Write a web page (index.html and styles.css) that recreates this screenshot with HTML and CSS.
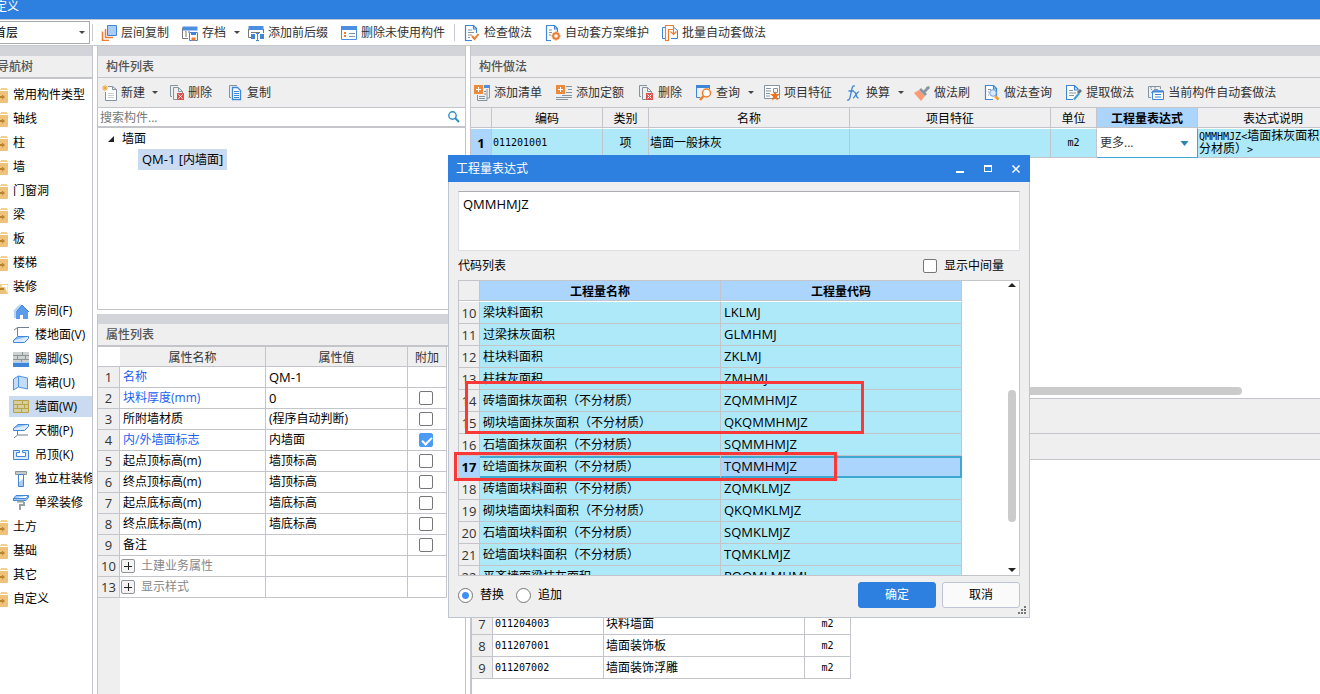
FILE: index.html
```html
<!DOCTYPE html>
<html lang="zh-CN">
<head>
<meta charset="utf-8">
<title>定义</title>
<link rel="stylesheet" href="styles.css">
</head>
<body>
<svg class="defs" aria-hidden="true">
  <symbol id="folder" viewBox="0 0 16 16"><path d="M9 1h6v1h1v1H8V2h1z" fill="#f3cf90"/><path d="M1 4h15v11q0 1-1 1H1z" fill="#eec27a"/><path d="M5 9h5V7.500l3 2.500-3 2.500V11H5z" fill="#b98330"/></symbol>
  <symbol id="folder-open" viewBox="0 0 16 16"><path d="M1 3h6v2h10v10H1z" fill="#f3cf90"/><path d="M10 6h5.500v8L13 8h-3z" fill="#fff"/><path d="M1 8h11l3 7H1z" fill="#eec27a"/><path d="M7 9h5v2H7z" fill="#b98330"/></symbol>
  <symbol id="caret" viewBox="0 0 6 3"><path d="M0 0h6L3 3z" fill="#444"/></symbol>
  <symbol id="del" viewBox="0 0 16 16"><path d="M9 .500H1.500v11H3" fill="none" stroke="#8494a0"/><path d="M8 14.500H4.500v-12h5l4 4V8M9.500 2.500v4h4" fill="none" stroke="#8494a0"/><path d="M8 8h7v7H8z" fill="#d9534f"/><path d="M9.500 9.500l4 4m0-4l-4 4" stroke="#fff" fill="none"/></symbol>
</svg>
<div class="app">
  <header class="titlebar">定义</header>
  <div class="toolbar main-bar">
    <select class="floor" aria-label="楼层"><option>首层</option></select><svg class="caret floor-caret"><use href="#caret"/></svg>
    <span class="sep"></span>
    <button class="tool"><svg class="ic" viewBox="0 0 16 16"><path d="M6.500 .500h9v10h-9z" fill="#a9cdf6" stroke="#3f86d8"/><path d="M4.500 4v8.500H12M1.500 6.500v9H8" fill="none" stroke="#ee7d31" stroke-width="1.500"/></svg>层间复制</button>
    <button class="tool"><svg class="ic" viewBox="0 0 16 16"><path d="M.5 1.500h15v4H.5z" fill="#4a8fe0"/><path d="M.5 3v10.500H6" fill="none" stroke="#777"/><path d="M3 7h2m1 0h2M3 9h2m-2 2h2" stroke="#777"/><path d="M7.500 7.500h8v8h-8z" fill="#fff" stroke="#3f86d8"/><path d="M9 7h5v3H9z" fill="#3f86d8"/><path d="M9.500 12.500h4v3h-4z" fill="#ee7d31"/></svg>存档<svg class="caret"><use href="#caret"/></svg></button>
    <button class="tool"><svg class="ic" viewBox="0 0 16 16"><path d="M.5 1h15v4H.5z" fill="#4a8fe0"/><path d="M.5 4v8.500H3M15.500 4v4M3 7.500h9" fill="none" stroke="#777"/><path d="M3 9h4v5H3zM12 9h4v5h-4z" fill="#3f86d8"/><path d="M8 8.500h3m-1.500 0v7M8 15.500h3" stroke="#3f86d8" fill="none"/></svg>添加前后缀</button>
    <button class="tool"><svg class="ic" viewBox="0 0 16 16"><path d="M.5 1.500h15v13H.5z" fill="#fff" stroke="#4a8fe0"/><path d="M0 1h16v4H0z" fill="#4a8fe0"/><path d="M8 8.500h6M8 11.500h6" stroke="#8494a0"/><path d="M3 7l2 2m0-2L3 9m0 1l2 2m0-2l-2 2" stroke="#ee7d31"/></svg>删除未使用构件</button>
    <span class="sep"></span>
    <button class="tool"><svg class="ic" viewBox="0 0 16 16"><path d="M8 15.500H1.500v-15h8l3 3V8M9.500 1v3h3" fill="#fff" stroke="#3f86d8" stroke-width="1.200"/><path d="M4 5h4M4 7.500h6M4 10h4M4 12.500h2" stroke="#8494a0"/><path d="M8 11l2.500 3 4-5" fill="none" stroke="#ee7d31" stroke-width="2"/></svg>检查做法</button>
    <button class="tool"><svg class="ic" viewBox="0 0 16 16"><path d="M6 15.500H1.500v-15h8l3 3V7M9.500 1v3h3" fill="#fff" stroke="#3f86d8" stroke-width="1.200"/><path d="M4 5h3M4 7.500h3M4 10h2" stroke="#8494a0"/><circle cx="11" cy="11" r="2.800" fill="none" stroke="#ee7d31" stroke-width="2"/><path d="M11 6.500v2m0 5v2M6.500 11h2m5 0h2M8 8l1 1m4 4l1 1m0-6l-1 1m-4 4l-1 1" stroke="#ee7d31" stroke-width="1.500"/></svg>自动套方案维护</button>
    <button class="tool"><svg class="ic" viewBox="0 0 16 16"><path d="M3 2.500H.5v11H3M12 2.500l3.500 3v8H9" fill="none" stroke="#3f86d8"/><path d="M8.500 .500h-5v15h3v-11h5v4m-3-2l3 3 3-3M8.500 .500h3v4" fill="none" stroke="#ee7d31" stroke-width="1.200"/></svg>批量自动套做法</button>
  </div>
  <div class="workspace">
    <nav class="nav panel">
      <div class="strip"></div>
      <h2 class="head thick">导航树</h2>
      <ul class="tree">
        <li><svg class="ic"><use href="#folder"/></svg>常用构件类型</li>
        <li><svg class="ic"><use href="#folder"/></svg>轴线</li>
        <li><svg class="ic"><use href="#folder"/></svg>柱</li>
        <li><svg class="ic"><use href="#folder"/></svg>墙</li>
        <li><svg class="ic"><use href="#folder"/></svg>门窗洞</li>
        <li><svg class="ic"><use href="#folder"/></svg>梁</li>
        <li><svg class="ic"><use href="#folder"/></svg>板</li>
        <li><svg class="ic"><use href="#folder"/></svg>楼梯</li>
        <li><svg class="ic"><use href="#folder-open"/></svg>装修</li>
        <li class="sub"><svg class="ic" viewBox="0 0 16 16"><path d="M3 8v8h4v-4h3v4h5V8L9 2z" fill="#5a9bea"/><path d="M4 8l5-6 7 7" fill="none" stroke="#4384d6"/><path d="M0 8l7-7 1 1-5 6v7H1V8z" fill="#b5d4f8"/></svg>房间(F)</li>
        <li class="sub"><svg class="ic" viewBox="0 0 16 16"><path d="M16 .5H4.500V9M4.500.5L1 3" fill="none" stroke="#708090"/><path d="M4.500 9.500h11l-4 4H.5z" fill="#8bbcf5" stroke="#3f86d8"/><path d="M.5 13.500v2h11l4-4v-2" fill="#dcebfc" stroke="#3f86d8"/></svg>楼地面(V)</li>
        <li class="sub"><svg class="ic" viewBox="0 0 16 16"><path d="M0 1h16v10H0z" fill="#cdd1d2"/><path d="M0 4.500h16M0 8.500h16M9.500 1v3.500M4.500 4.500v4M12.500 4.500v4M8.500 8.500V11" stroke="#8b9497"/><path d="M0 11h16v5H0z" fill="#3f86d8"/><path d="M0 11h16v1H0z" fill="#a8cdf7"/></svg>踢脚(S)</li>
        <li class="sub"><svg class="ic" viewBox="0 0 16 16"><path d="M.5 4l5-3v11l-5 3zM5.500 1l9 2v11l-9-2z" fill="#c3dcf9" stroke="#4e93de"/></svg>墙裙(U)</li>
        <li class="sub on"><svg class="ic" viewBox="0 0 16 16"><path d="M.5 1.500h15v12H.5z" fill="#d5cf9f" stroke="#b9a347"/><path d="M0 5.500h16M0 9.500h16M9.500 1v4.500M4.500 5.500v4M11.500 5.500v4M8.500 9.500V14" stroke="#b9a347"/></svg>墙面(W)</li>
        <li class="sub"><svg class="ic" viewBox="0 0 16 16"><path d="M5 1.500h10.500l-4 4H.5z" fill="#8bbcf5" stroke="#3f86d8"/><path d="M.5 5.500v2h11l4-4v-2" fill="#dcebfc" stroke="#3f86d8"/><path d="M4.500 8v4L1 15m3.500-3H15" fill="none" stroke="#708090"/></svg>天棚(P)</li>
        <li class="sub"><svg class="ic" viewBox="0 0 16 16"><path d="M.5 3.500h6v2h-3v4h9v-4h-3v-2h6v9H.5z" fill="#dcebfc" stroke="#3f86d8"/></svg>吊顶(K)</li>
        <li class="sub"><svg class="ic" viewBox="0 0 16 16"><path d="M2.500.5h11v3h-11z" fill="#c5c9c9" stroke="#8b9497"/><path d="M5.500 3.500h5v12h-5z" fill="#fff" stroke="#3f86d8"/><path d="M6 11l4-3v7H6z" fill="#a9cdf6"/></svg>独立柱装修</li>
        <li class="sub"><svg class="ic" viewBox="0 0 16 16"><path d="M3 .5h12.500L13 3.500H.5zM.5 3.500v2H13l2.500-3v-2" fill="#9fc8f8" stroke="#3f86d8"/><path d="M4 6.500h7M11 7v3H7v5" fill="none" stroke="#9aa1a5" stroke-width="2"/></svg>单梁装修</li>
        <li><svg class="ic"><use href="#folder"/></svg>土方</li>
        <li><svg class="ic"><use href="#folder"/></svg>基础</li>
        <li><svg class="ic"><use href="#folder"/></svg>其它</li>
        <li><svg class="ic"><use href="#folder"/></svg>自定义</li>
      </ul>
    </nav>

    <div class="middle">
      <section class="panel parts">
        <div class="strip"></div>
        <h2 class="head">构件列表</h2>
        <div class="toolbar panel-bar">
          <button class="tool"><svg class="ic" viewBox="0 0 16 16"><path d="M3.500 7v8.500h11v-11l-4-3H6M10.500 1.500v3h4" fill="#fff" stroke="#8494a0"/><path d="M6 8.500h6M6 10.500h6M6 12.500h6" stroke="#c8ced2"/><path d="M1 1l4 4m0-4L1 5m2-5v6M0 3h6" stroke="#f0a030"/></svg>新建<svg class="caret"><use href="#caret"/></svg></button>
          <button class="tool"><svg class="ic"><use href="#del"/></svg>删除</button>
          <button class="tool"><svg class="ic" viewBox="0 0 16 16"><path d="M9 .5H1.500v12H3" fill="none" stroke="#8494a0"/><path d="M4.500 2.500h5l3 3v9h-8z" fill="#fff" stroke="#3f86d8" stroke-width="1.300"/><path d="M6 6.500h5M6 8.500h5M6 10.500h5M6 12.500h5" stroke="#3f86d8"/></svg>复制</button>
        </div>
        <div class="search"><input type="text" placeholder="搜索构件..." aria-label="搜索构件"><svg class="mag" viewBox="0 0 12 12"><circle cx="4.500" cy="4.500" r="3.700" fill="none" stroke="#2b8fc4" stroke-width="1.400"/><path d="M7 7l4 4" stroke="#2b8fc4" stroke-width="2"/></svg></div>
        <div class="parts-tree">
          <div class="root"><svg viewBox="0 0 6 6"><path d="M6 0v6H0z" fill="#222"/></svg>墙面</div>
          <div class="leaf"><span class="latin">QM-1 [</span>内墙面<span class="latin">]</span></div>
        </div>
      </section>
      <section class="panel props">
        <div class="strip"></div>
        <h2 class="head thick">属性列表</h2>
        <div class="props-body">
          <table class="grid props-table">
            <colgroup><col class="c-no"><col class="c-name"><col class="c-val"><col class="c-chk"></colgroup>
            <thead><tr><th></th><th>属性名称</th><th>属性值</th><th>附加</th></tr></thead>
            <tbody>
              <tr><th>1</th><td class="link">名称</td><td class="latin">QM-1</td><td></td></tr>
              <tr><th>2</th><td class="link">块料厚度(mm)</td><td class="latin">0</td><td><input type="checkbox" aria-label="块料厚度附加"></td></tr>
              <tr><th>3</th><td>所附墙材质</td><td>(程序自动判断)</td><td><input type="checkbox" aria-label="所附墙材质附加"></td></tr>
              <tr><th>4</th><td class="link">内/外墙面标志</td><td>内墙面</td><td><input type="checkbox" checked aria-label="内/外墙面标志附加"></td></tr>
              <tr><th>5</th><td>起点顶标高(m)</td><td>墙顶标高</td><td><input type="checkbox" aria-label="起点顶标高附加"></td></tr>
              <tr><th>6</th><td>终点顶标高(m)</td><td>墙顶标高</td><td><input type="checkbox" aria-label="终点顶标高附加"></td></tr>
              <tr><th>7</th><td>起点底标高(m)</td><td>墙底标高</td><td><input type="checkbox" aria-label="起点底标高附加"></td></tr>
              <tr><th>8</th><td>终点底标高(m)</td><td>墙底标高</td><td><input type="checkbox" aria-label="终点底标高附加"></td></tr>
              <tr><th>9</th><td>备注</td><td></td><td><input type="checkbox" aria-label="备注附加"></td></tr>
              <tr><th>10</th><td class="group"><div><button class="plus" aria-label="展开"></button>土建业务属性</div></td><td></td><td></td></tr>
              <tr><th>13</th><td class="group"><div><button class="plus" aria-label="展开"></button>显示样式</div></td><td></td><td></td></tr>
            </tbody>
          </table>
        </div>
      </section>
    </div>

    <section class="panel methods">
      <div class="strip"></div>
      <h2 class="head">构件做法</h2>
      <div class="toolbar method-bar">
        <button class="tool"><svg class="ic" viewBox="0 0 16 16"><path d="M10 1h5.500v12H13M3.500 10v5.500H13V4" fill="none" stroke="#8494a0"/><path d="M5 11.500h6M5 13.500h6M10 6.500h2M10 9h2" stroke="#8494a0"/><path d="M10 0h6v3h-6z" fill="#4a8fe0"/><path d="M0 0h9v9H0z" fill="#ee8a3c"/><path d="M4.500 2v5M2 4.500h5" stroke="#fff"/></svg>添加清单</button>
        <button class="tool"><svg class="ic" viewBox="0 0 16 16"><path d="M10 1.500h6M12 4.500h4M10 7.500h6M6 10.500h10M0 12.500h16M0 14.500h12" stroke="#8494a0"/><path d="M0 0h9v9H0z" fill="#ee8a3c"/><path d="M4.500 2v5M2 4.500h5" stroke="#fff"/></svg>添加定额</button>
        <button class="tool"><svg class="ic"><use href="#del"/></svg>删除</button>
        <button class="tool"><svg class="ic" viewBox="0 0 16 16"><path d="M4 12.500H.5V1h13v3" fill="none" stroke="#3f86d8"/><path d="M0 0h14v3H0z" fill="#3f86d8"/><circle cx="10.500" cy="8" r="4" fill="#fff" stroke="#ee7d31" stroke-width="1.500"/><path d="M7.500 11L4 15" stroke="#ee7d31" stroke-width="2.500"/></svg>查询<svg class="caret"><use href="#caret"/></svg></button>
        <button class="tool"><svg class="ic" viewBox="0 0 16 16"><path d="M.5 .500h15v13H.5z" fill="#fff" stroke="#8494a0"/><path d="M2 3.500h5M2 6h5M2 8.500h4M2 11h4M9.500 3.500h4v4h-4z" stroke="#8494a0" fill="none"/><path d="M11 6l1.300 3H16l-3 2.500 1 4-3-2-3 2 1-4L6 9h3.700z" fill="#ee7320"/></svg>项目特征</button>
        <button class="tool"><svg class="ic" viewBox="0 0 16 16"><path d="M9 1C6 0 6 4 5 8s-1 8-4 7M2.500 6H8" fill="none" stroke="#3f86d8" stroke-width="1.300"/><path d="M7.500 7c3-1 2 6 5 6M13 7c-2-1-4 6-6 6" fill="none" stroke="#3f86d8" stroke-width="1.300"/></svg>换算<svg class="caret"><use href="#caret"/></svg></button>
        <button class="tool"><svg class="ic" viewBox="0 0 16 16"><path d="M0 8l5-3 6 6-4 5z" fill="#fb9b73"/><path d="M5 5l2-2 6 6-2 2z" fill="#8997a3"/><path d="M9 6l3-3V2l3-1 1 2-2 2-3 3z" fill="#8997a3"/></svg>做法刷</button>
        <button class="tool"><svg class="ic" viewBox="0 0 16 16"><path d="M9 14.500H1.500v-14h8l3 3V12M9.500 1v3h3" fill="#fff" stroke="#3f86d8" stroke-width="1.200"/><path d="M4 4.500h3M4 7h1M4 10h1" stroke="#8494a0"/><circle cx="9" cy="8" r="3.300" fill="#dbe9fb" stroke="#6a9fe0"/><path d="M11 11l3.500 3.500" stroke="#f0a030" stroke-width="2.500"/></svg>做法查询</button>
        <button class="tool"><svg class="ic" viewBox="0 0 16 16"><path d="M7 14.500H.5v-14h8l4 4M8.500 1v4h4" fill="#fff" stroke="#3f86d8" stroke-width="1.200"/><path d="M3 5.500h4M3 8h7M3 10.500h5" stroke="#8494a0"/><path d="M8 14.500l5-6" stroke="#3fa4c8" stroke-width="2"/><path d="M12 8l3-3" stroke="#667480" stroke-width="3"/></svg>提取做法</button>
        <button class="tool"><svg class="ic" viewBox="0 0 16 16"><path d="M3 12.500H.5v-11h12V4" fill="none" stroke="#8494a0"/><path d="M3 4.500h1m2 0h4M3 7.500h1M3 1.500v2m4-2v2" stroke="#8494a0"/><path d="M4.500 6h11v8.500h-11z" fill="#fff" stroke="#3f86d8"/><path d="M5 6h10v1H5zM7 9.500h6M7 12h6" fill="#3f86d8" stroke="#3f86d8"/></svg>当前构件自动套做法</button>
      </div>
      <div class="canvas">
        <table class="grid methods-table">
          <colgroup><col class="m0"><col class="m1"><col class="m2"><col class="m3"><col class="m4"><col class="m5"><col class="m6"><col class="m7"></colgroup>
          <thead><tr><th></th><th>编码</th><th>类别</th><th>名称</th><th>项目特征</th><th>单位</th><th class="cur">工程量表达式</th><th>表达式说明</th></tr></thead>
          <tbody><tr><th>1</th><td class="mono">011201001</td><td class="mid">项</td><td>墙面一般抹灰</td><td></td><td class="mid mono">m2</td><td class="edit"><div class="expr"><select aria-label="工程量表达式"><option>更多...</option></select><svg viewBox="0 0 8 5"><path d="M0 0h8L4 5z" fill="#2a84ae"/></svg></div></td><td class="note"><span class="mono">QMMHMJZ&lt;</span>墙面抹灰面积<br>分材质）<span class="mono">&gt;</span></td></tr></tbody>
        </table>
        <div class="hscroll"></div>
      </div>
      <div class="band tab-band"></div>
      <div class="band tool-band"></div>
      <div class="lower">
        <table class="grid lower-table">
          <colgroup><col class="l0"><col class="l1"><col class="l2"><col class="l3"></colgroup>
          <tbody>
            <tr><th></th><td></td><td></td><td></td></tr>
            <tr><th></th><td></td><td></td><td></td></tr>
            <tr><th></th><td></td><td></td><td></td></tr>
            <tr><th></th><td></td><td></td><td></td></tr>
            <tr><th></th><td></td><td></td><td></td></tr>
            <tr><th></th><td></td><td></td><td></td></tr>
            <tr><th></th><td></td><td></td><td></td></tr>
            <tr><th>7</th><td class="mono">011204003</td><td>块料墙面</td><td class="mid mono">m2</td></tr>
            <tr><th>8</th><td class="mono">011207001</td><td>墙面装饰板</td><td class="mid mono">m2</td></tr>
            <tr><th>9</th><td class="mono">011207002</td><td>墙面装饰浮雕</td><td class="mid mono">m2</td></tr>
          </tbody>
        </table>
      </div>
    </section>
  </div>
</div>

<div class="dialog" role="dialog" aria-label="工程量表达式">
  <div class="dlg-title"><span>工程量表达式</span>
    <div class="win">
      <button aria-label="最小化"><svg viewBox="0 0 10 10"><path d="M1 7h8v2H1z" fill="#fff"/></svg></button>
      <button aria-label="最大化"><svg viewBox="0 0 10 10"><path d="M1 1h8v7H1zM2 3v4h6V3z" fill="#fff" fill-rule="evenodd"/></svg></button>
      <button aria-label="关闭"><svg viewBox="0 0 10 10"><path d="M1.500 1.500l7 7m0-7l-7 7" stroke="#fff" stroke-width="1.500"/></svg></button>
    </div>
  </div>
  <div class="dlg-body">
    <textarea class="expr-text" aria-label="表达式">QMMHMJZ</textarea>
    <div class="list-head"><span>代码列表</span><label><input type="checkbox">显示中间量</label></div>
    <div class="codes">
      <table class="grid codes-table">
        <colgroup><col class="k0"><col class="k1"><col class="k2"></colgroup>
        <thead><tr><th></th><th>工程量名称</th><th>工程量代码</th></tr></thead>
        <tbody>
          <tr><th>10</th><td>梁块料面积</td><td>LKLMJ</td></tr>
          <tr><th>11</th><td>过梁抹灰面积</td><td>GLMHMJ</td></tr>
          <tr><th>12</th><td>柱块料面积</td><td>ZKLMJ</td></tr>
          <tr><th>13</th><td>柱抹灰面积</td><td>ZMHMJ</td></tr>
          <tr><th>14</th><td>砖墙面抹灰面积（不分材质）</td><td>ZQMMHMJZ</td></tr>
          <tr><th>15</th><td>砌块墙面抹灰面积（不分材质）</td><td>QKQMMHMJZ</td></tr>
          <tr><th>16</th><td>石墙面抹灰面积（不分材质）</td><td>SQMMHMJZ</td></tr>
          <tr class="cur"><th>17</th><td>砼墙面抹灰面积（不分材质）</td><td>TQMMHMJZ</td></tr>
          <tr><th>18</th><td>砖墙面块料面积（不分材质）</td><td>ZQMKLMJZ</td></tr>
          <tr><th>19</th><td>砌块墙面块料面积（不分材质）</td><td>QKQMKLMJZ</td></tr>
          <tr><th>20</th><td>石墙面块料面积（不分材质）</td><td>SQMKLMJZ</td></tr>
          <tr><th>21</th><td>砼墙面块料面积（不分材质）</td><td>TQMKLMJZ</td></tr>
          <tr><th>22</th><td>平齐墙面梁抹灰面积</td><td>PQQMLMHMJ</td></tr>
        </tbody>
      </table>
      <div class="vscroll"><svg viewBox="0 0 8 4"><path d="M0 4h8L4 0z" fill="#222"/></svg><span class="thumb"></span><svg viewBox="0 0 8 4"><path d="M0 0h8L4 4z" fill="#222"/></svg></div>
    </div>
    <div class="dlg-foot">
      <label><input type="radio" name="mode" checked>替换</label>
      <label><input type="radio" name="mode">追加</label>
      <span class="space"></span>
      <button class="btn primary">确定</button>
      <button class="btn">取消</button>
    </div>
  </div>
  <svg class="grip" viewBox="0 0 8 8"><path d="M6 0h2v2H6zM3 3h2v2H3zM6 3h2v2H6zM0 6h2v2H0zM3 6h2v2H3zM6 6h2v2H6z" fill="#777"/></svg>
  <div class="mark mark-a"></div>
  <div class="mark mark-b"></div>
</div>
</body>
</html>
```

FILE: styles.css
```css
* { box-sizing: border-box; }
html, body { height: 100%; }
body {
  margin: 0;
  overflow: hidden;
  background: #fff;
  color: #000;
  font: 12px/16px "Open Sans", "Noto Sans CJK SC", sans-serif;
}
button, select, input, textarea { font: inherit; color: inherit; margin: 0; }
button { border: 0; background: none; padding: 0; }
svg { display: block; flex: none; }
.defs { position: absolute; width: 0; height: 0; }
.latin { font-size: 13px; }
.mono { font-family: "DejaVu Sans Mono", monospace; font-size: 10px; }

.app {
  width: calc(100% + 8px);
  height: 100vh;
  margin-left: -8px;
  display: flex;
  flex-direction: column;
}
.titlebar {
  height: 20px;
  padding-left: 3px;
  line-height: 13px;
  background: #2d7fe0;
  border-bottom: 1px solid #c3c6cc;
  color: #fff;
}
.toolbar { display: flex; align-items: center; white-space: nowrap; }
.main-bar { height: 26px; gap: 13px; border-bottom: 1px solid #c6c8cc; }
.panel-bar, .method-bar { height: 30px; background: #efefef; border-bottom: 1px solid #c3c5ca; }
.panel-bar { gap: 16px; padding-left: 4px; }
.method-bar { gap: 14px; padding-left: 3px; }
.tool { display: flex; align-items: center; gap: 4px; color: #333; }
.panel-bar .tool { gap: 3px; }
.ic { width: 16px; height: 16px; }
.caret { width: 6px; height: 3px; margin: 0 -5px 0 4px; }
.method-bar .caret { margin-right: -4px; }
.floor {
  width: 98px;
  height: 23px;
  padding: 0 0 0 1px;
  border: 1px solid #a9abad;
  background: #fff;
  appearance: none;
}
.floor-caret { margin: 0 0 0 -24px; }
.sep { width: 1px; height: 17px; background: #c8cacf; margin: 0 -4px; }
.floor-caret + .sep { margin: 0 -5px 0 -6px; }

.workspace { flex: 1; min-height: 0; display: grid; grid-template-columns: 101px 369px 1fr; gap: 4px; }
.panel { min-width: 0; min-height: 0; overflow: hidden; display: flex; flex-direction: column; }
.strip { height: 10px; flex: none; background: #d3d4da; }
.head {
  margin: 0;
  padding-left: 8px;
  flex: none;
  height: 22px;
  line-height: 22px;
  background: #efefef;
  border-bottom: 1px solid #c3c5ca;
  color: #555;
  font-size: 12px;
  font-weight: 500;
}
.head.thick { height: 23px; border-bottom-width: 2px; }

.nav { border-right: 1px solid #c3c5ca; }
.nav .head { padding-left: 5px; }
.tree { list-style: none; margin: 0; padding: 3px 0 0; white-space: nowrap; }
.tree li { height: 24px; padding-top: 1px; display: flex; align-items: center; gap: 5px; }
.tree .sub { margin-left: 17px; padding-left: 4px; gap: 6px; overflow: hidden; border: 1px solid #fff; border-width: 2px 0 1px; padding-top: 0; }
.tree .on { background: #c9daf1; }

.middle { display: flex; flex-direction: column; gap: 4px; min-height: 0; }
.parts, .props { border: 0 solid #c3c5ca; border-width: 0 1px 1px 1px; }
.parts { flex: 0 0 264px; }
.props { flex: 1; border-bottom: 0; }
.search { height: 20px; display: flex; align-items: center; border-bottom: 2px solid #c3c5ca; padding-right: 5px; }
.search input { flex: 1; min-width: 0; border: 0; outline: 0; padding: 0 0 0 2px; height: 18px; }
.search input::placeholder { color: #777; opacity: 1; }
.mag { width: 12px; height: 12px; }
.parts-tree { flex: 1; }
.root { height: 21px; display: flex; align-items: center; gap: 8px; padding-left: 10px; }
.root svg { width: 6px; height: 6px; }
.leaf { width: max-content; height: 21px; line-height: 20px; margin-left: 40px; padding: 0 4px; background: #c9daf1; }

.grid { border-collapse: separate; border-spacing: 0; table-layout: fixed; white-space: nowrap; }
.grid th, .grid td { padding: 0; border: 0 solid #c3c5ca; border-width: 0 1px 1px 0; overflow: hidden; font-weight: 400; }
.grid th { background: #efefef; text-align: center; }
.grid td { text-align: left; padding-left: 3px; }
.grid tbody th { font-size: 13px; color: #333; }
.grid td.mid { text-align: center; padding: 0; }

.props-body { flex: 1; background: linear-gradient(to right, #efefef 22px, #fff 22px); }
.props-table { width: 349px; }
.c-no { width: 22px; }
.c-name { width: 146px; }
.c-val { width: 142px; }
.c-chk { width: 39px; }
.props-table thead th { height: 20px; line-height: 16px; padding-top: 2px; color: #333; }
.props-table thead th:first-child { background: #fff; border-right: 0; }
.props-table tbody th, .props-table tbody td { height: 21px; line-height: 20px; }
.props-table td:last-child { padding: 0 2px 0 0; }
.props-table td:last-child input { display: block; margin: 0 auto; }
.grid .link { color: #1a5ff2; }
.grid .group { color: #888; padding-left: 1px; }
.group div { display: flex; align-items: center; gap: 6px; }
.plus {
  width: 14px;
  height: 14px;
  border: 1px solid #909499;
  border-radius: 2px;
  background: linear-gradient(#222, #222) center / 8px 1px no-repeat, linear-gradient(#222, #222) center / 1px 8px no-repeat, #f4f4f4;
}

input[type="checkbox"], input[type="radio"] { appearance: none; background: #fff; border: 1px solid #777; flex: none; }
input[type="checkbox"] { width: 14px; height: 14px; border-radius: 2px; }
input[type="checkbox"]:checked { background: #4c9bf5; border-color: #4c9bf5; }
input[type="checkbox"]:checked::after {
  content: "";
  display: block;
  width: 8px;
  height: 4px;
  margin: 3px 0 0 2px;
  border: 2px solid #fff;
  border-width: 0 0 2px 2px;
  transform: rotate(-45deg);
}
input[type="radio"] { width: 15px; height: 15px; border-radius: 50%; }
input[type="radio"]:checked { background: radial-gradient(circle, #3f8ff0 3px, #fff 4px); }

.methods { border-left: 1px solid #c3c5ca; }
.methods > * { flex: none; }
.canvas { height: 291px; display: flex; flex-direction: column; justify-content: space-between; border-bottom: 1px solid #c3c5ca; }
.methods-table { width: 878px; }
.m0 { width: 21px; }
.m1 { width: 111px; }
.m2 { width: 46px; }
.m3, .m4 { width: 201px; }
.m5 { width: 46px; }
.m6 { width: 101px; }
.m7 { width: 151px; }
.methods-table thead th { height: 20px; line-height: 16px; padding-top: 2px; }
.methods-table tbody th, .methods-table tbody td { height: 30px; border-top: 1px solid #fff; }
.methods-table tbody td { background: #aee9fa; padding-left: 1px; }
.methods-table tbody th, .grid thead .cur { background: #acd5fe; font-weight: 700; color: #000; }
.methods-table tbody td.edit { background: #fff; padding: 0; border-color: #3fa8d0; border-top-color: #fff; }
.expr { display: flex; align-items: center; padding-right: 8px; }
.expr select { flex: 1; border: 0; background: none; appearance: none; padding: 0 0 0 3px; color: #333; }
.expr svg { width: 9px; height: 5px; }
.methods-table tbody td.note { line-height: 12px; }
.hscroll { width: 781px; max-width: 100%; height: 8px; margin: 0 0 3px -10px; border-radius: 4px; background: #cbcbcb; }
.band { background: #efefef; border-bottom: 1px solid #c3c5ca; }
.tab-band { height: 35px; }
.tool-band { height: 26px; }
.methods > .lower { flex: 1; border-left: 1px solid #c3c5ca; }
.lower-table { width: 379px; }
.l0 { width: 21px; }
.l1 { width: 111px; }
.l2 { width: 201px; }
.l3 { width: 46px; }
.lower-table th, .lower-table td { height: 22px; line-height: 16px; }
.lower-table td { padding-left: 2px; }
.lower-table tr:first-child > * { height: 21px; }

.dialog {
  position: absolute;
  left: 448px;
  top: 155px;
  width: 582px;
  background: #efefef;
  border: 1px solid #bfc5d0;
  border-top: 0;
}
.dlg-title { height: 27px; margin: 0 -1px; padding: 0 9px 0 8px; display: flex; justify-content: space-between; align-items: center; background: #2d7fe0; color: #fff; }
.win { display: flex; gap: 18px; }
.win svg { width: 10px; height: 10px; }
.dlg-body { padding: 9px; display: flex; flex-direction: column; }
.expr-text { width: 100%; height: 60px; padding: 3px 4px; border: 1px solid #dcdfe6; border-top-color: #abadb3; resize: none; outline: 0; font-size: 13px; line-height: 18px; }
.list-head { height: 29px; padding-right: 16px; display: flex; justify-content: space-between; align-items: center; }
.list-head label, .dlg-foot label { display: flex; align-items: center; gap: 7px; }
.codes { height: 296px; display: flex; justify-content: space-between; align-items: flex-start; overflow: hidden; background: #fff; border: 1px solid #c3c5ca; }
.codes-table { width: 503px; }
.k0 { width: 21px; }
.k1, .k2 { width: 241px; }
.codes-table thead th { height: 20px; line-height: 16px; padding-top: 2px; font-weight: 700; background: #acd5fe; }
.codes-table thead th:first-child { background: #efefef; }
.codes-table tbody th, .codes-table tbody td { height: 22px; line-height: 18px; }
.codes-table tbody tr:first-child > * { height: 23px; border-top: 1px solid #fff; }
.codes-table td { background: #aee9fa; }
.codes-table td:last-child { font-size: 13px; padding-bottom: 1px; }
.codes-table .cur > th { background: #acd5fe; font-weight: 700; color: #000; }
.codes-table .cur > td { box-shadow: inset 0 2px #3fa8d0, inset 0 -1px #3fa8d0; border-bottom-color: #3fa8d0; }
.codes-table .cur > td:last-child { background: #acd5fe; box-shadow: inset 0 2px #3fa8d0, inset -1px -1px #3fa8d0; border-right-color: #3fa8d0; }
.vscroll { width: 8px; height: 100%; margin-right: 3px; padding: 2px 0 3px; display: flex; flex-direction: column; }
.vscroll svg { width: 8px; height: 4px; }
.thumb { height: 132px; margin: 103px 0 auto; border-radius: 4px; background: #cbcbcb; }
.dlg-foot { height: 26px; margin-top: 6px; display: flex; align-items: flex-start; }
.dlg-foot label { height: 26px; margin-right: 12px; }
.space { flex: 1; }
.btn { width: 78px; height: 26px; border: 1px solid #bfc5d8; border-radius: 3px; background: #fafafa; margin-left: 6px; }
.btn.primary { background: #2d7fe0; border-color: #2d7fe0; color: #fff; }
.grip { position: absolute; right: 3px; bottom: 3px; width: 8px; height: 8px; }
.mark { position: absolute; border: 3px solid #fb3838; pointer-events: none; }
.mark-a { left: 16px; top: 226px; width: 399px; height: 53px; }
.mark-b { left: 5px; top: 297px; width: 383px; height: 29px; }
```
